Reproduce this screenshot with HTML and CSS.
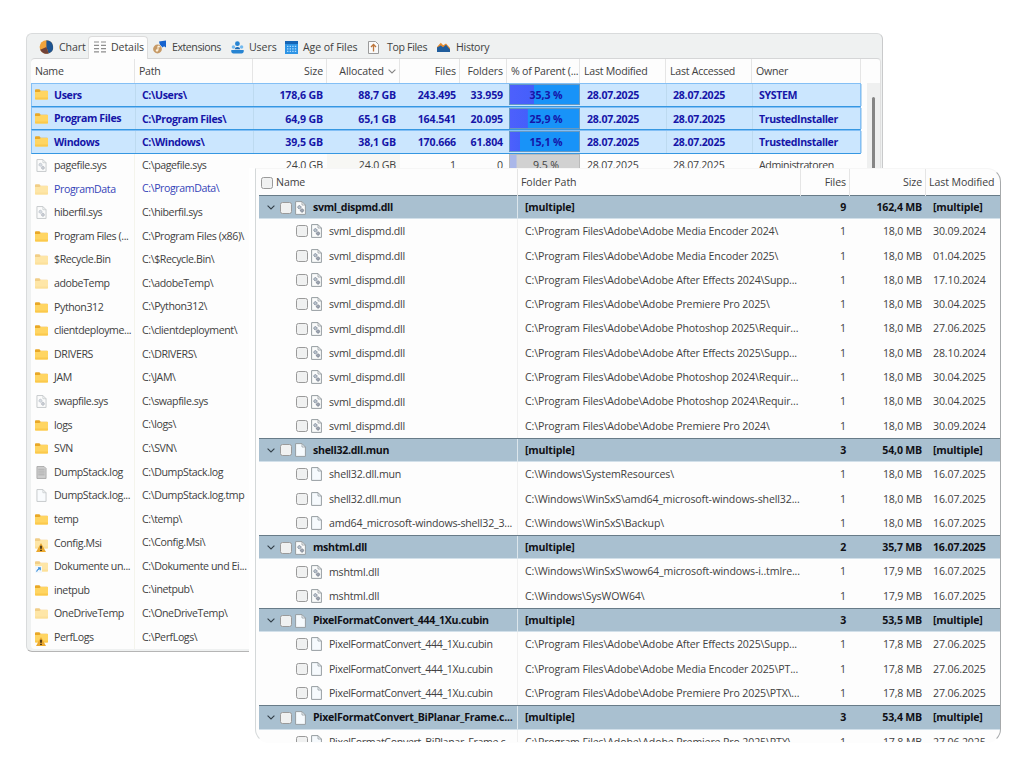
FILE: index.html
```html
<!DOCTYPE html>
<html lang="en">
<head>
<meta charset="utf-8">
<title>Disk usage</title>
<link rel="stylesheet" href="styles.css">
</head>
<body>
<svg class="defs" width="0" height="0">
  <symbol id="folder" viewBox="0 0 13 11"><path d="M0 1.2Q0 .3 .9 .3H4.4L5.7 1.7H12.2Q13 1.7 13 2.5V4H0Z" fill="#e9a827"/><path d="M0 2.9H4.5L5.8 2H13V9.8Q13 10.5 12.3 10.5H.7Q0 10.5 0 9.8Z" fill="#ffd562"/><path d="M0 8.5H13V9.8Q13 10.5 12.3 10.5H.7Q0 10.5 0 9.8Z" fill="#fbc94c"/></symbol>
  <symbol id="doc" viewBox="0 0 11 14"><path d="M.6 .6H7L10.4 4V13.4H.6Z" fill="#f6fafd" stroke="#969da1"/><path d="M7 .6V4H10.4" fill="none" stroke="#969da1" stroke-width=".8"/></symbol>
  <symbol id="gear" viewBox="0 0 11 14"><path d="M.6 .6H7L10.4 4V13.4H.6Z" fill="#fafbfb" stroke="#969da1"/><path d="M7 .6V4H10.4" fill="none" stroke="#969da1" stroke-width=".8"/><circle cx="4.4" cy="6.2" r="1.6" fill="#bcc5ce" stroke="#7e899a" stroke-dasharray="1 .3"/><circle cx="7" cy="9.5" r="1.6" fill="#9da5b2" stroke="#737b89" stroke-dasharray="1 .3"/></symbol>
  <symbol id="log" viewBox="0 0 11 14"><path d="M.6 .6H8.3L10.4 2.7V13.4H.6Z" fill="#cfcfcf" stroke="#aaa"/><path d="M2 3.5H8.8M2 5.5H8.8M2 7.5H8.8M2 9.5H8.8" stroke="#aaa" stroke-width=".9"/></symbol>
  <symbol id="warn" viewBox="0 0 10 9"><path d="M5 0L10 9H0Z" fill="#eba92f"/><path d="M5 2.7V5.7M5 6.7V7.9" stroke="#241c16" stroke-width="1.5"/></symbol>
  <symbol id="link" viewBox="0 0 7 7"><path d="M0 0H7V7H0Z" fill="#f2f8fd"/><path d="M1.5 5.6Q2 3.5 4.8 2.5M3 1.9H5.3V4.2" fill="none" stroke="#3c8fdc" stroke-width="1.1"/></symbol>
  <symbol id="chev" viewBox="0 0 8 5"><path d="M.6 .6L4 4L7.4 .6" fill="none" stroke="currentColor" stroke-width="1.1"/></symbol>
</svg>
<main class="canvas">
  <section class="window usage">
    <nav class="tabs">
      <span class="tab t-chart"><svg width="15" height="14" viewBox="0 0 15 14"><circle cx="7.4" cy="7" r="6.8" fill="#f2a33a"/><path d="M7.4 .2A6.8 6.8 0 0 1 9.6 13.4L7.4 7Z" fill="#1f5490"/><path d="M7.4 7L9.6 13.4A6.8 6.8 0 0 1 1.2 9.8Z" fill="#704238"/></svg><span class="tx">Chart</span></span>
      <span class="tab t-details active"><svg width="12" height="12" viewBox="0 0 12 12"><path d="M0 1H5M0 4.3H5M0 7.6H5M0 10.9H5M7 1H12M7 4.3H12M7 7.6H12M7 10.9H12" stroke="#8d8d8d" stroke-width="1.2"/></svg><span class="tx">Details</span></span>
      <span class="tab t-ext"><svg width="14" height="14" viewBox="0 0 14 14"><path d="M6 1.4L13 .6V7.4L11 6.2L9.6 7.4L6.8 4.6Z" fill="#1563cf"/><circle cx="4.5" cy="9" r="4.4" fill="#c69a67"/><path d="M5 6V10.2M5 6L7 7" stroke="#fff2dc" stroke-width="1.1" fill="none"/><circle cx="4" cy="10.4" r="1.2" fill="#fff2dc"/></svg><span class="tx">Extensions</span></span>
      <span class="tab t-users"><svg width="13" height="13" viewBox="0 0 13 13"><circle cx="6.4" cy="2.7" r="2.4" fill="#2784d2"/><circle cx="2.4" cy="6" r="1.7" fill="#71b8ef"/><circle cx="10.6" cy="6" r="1.7" fill="#71b8ef"/><path d="M3.7 8.2Q4 6 6.4 6Q9 6 9.2 8.2Z" fill="#1767b2"/><path d="M.3 9H12.7V10.7Q12.3 12.5 10.7 12.5H2.3Q.6 12.5 .3 10.7Z" fill="#2784d2"/></svg><span class="tx">Users</span></span>
      <span class="tab t-age"><svg width="13" height="13" viewBox="0 0 13 13"><path d="M0 0H13V13H0Z" fill="#2d94e5"/><path d="M0 0H13V3H0Z" fill="#1565b5"/><path d="M2 5.3H11.4M2 7.8H11.4M2 10.3H11.4" stroke="#addbff" stroke-width="1.3" stroke-dasharray="1.4 1.2"/></svg><span class="tx">Age of Files</span></span>
      <span class="tab t-top"><svg width="11" height="13" viewBox="0 0 11 13"><path d="M.5 .5H7.5L10.5 3.5V12.5H.5Z" fill="#fafafa" stroke="#9b9b9b"/><path d="M5.5 10.5V4M3 6L5.5 3.5L8 6" fill="none" stroke="#bc753b" stroke-width="1.3"/></svg><span class="tx">Top Files</span></span>
      <span class="tab t-hist"><svg width="13" height="10" viewBox="0 0 13 10"><path d="M0 5L3.8 .8L6.2 3.2L9 1.6L13 6V10H0Z" fill="#e78b2c"/><path d="M0 5.5L3.8 3.4L6 5.3L9 2.8L13 7.4V10H0Z" fill="#205d9c"/></svg><span class="tx">History</span></span>
    </nav>
    <div class="body">
      <div class="table">
        <div class="cols uhead"><span>Name</span><span>Path</span><span class="r">Size</span><span class="r alloc">Allocated<svg class="sort" width="8" height="5"><use href="#chev"/></svg></span><span class="r">Files</span><span class="r">Folders</span><span>% of Parent (...</span><span>Last Modified</span><span>Last Accessed</span><span>Owner</span></div>
        <div id="usage-rows"></div>
      </div>
      <div class="scroll"><div class="thumb"></div></div>
    </div>
  </section>
  <section class="front">
    <div class="window dups">
      <div class="dcols dhead"><span class="first"><i class="check"></i>Name</span><span>Folder Path</span><span class="r">Files</span><span class="r">Size</span><span>Last Modified</span></div>
      <div id="dup-rows"></div>
    </div>
  </section>
</main>
<script src="script.js"></script>
</body>
</html>
```
FILE: styles.css
```css
* { box-sizing: border-box; }
body { margin: 0; background: #fff; font-family: "Open Sans", "Noto Sans", sans-serif; font-size: 10.6px; letter-spacing: -0.1px; color: #414141; overflow: hidden; }
.defs { position: absolute; }
.canvas { position: relative; width: 1024px; height: 768px; overflow: hidden; }
svg { display: block; flex: none; }
span { white-space: pre; }

.usage { position: absolute; left: 26px; top: 33px; width: 857px; height: 619px; display: flex; flex-direction: column; background: #eff1f1; border: 1px solid #d9dbdc; border-right-color: #c9cacb; border-bottom: 1px solid #b5b5b5; border-radius: 6px; padding: 0 1px 2px 4px; }
.tabs { display: flex; height: 24px; flex: none; }
.tab { display: flex; align-items: center; height: 24px; padding-top: 2px; padding-left: 8px; gap: 5px; }
.t-chart { width: 57px; }
.t-details { width: 60px; gap: 5px; padding-left: 5px; }
.t-ext { width: 77px; padding-left: 5px; letter-spacing: -0.45px; }
.t-users { width: 54px; padding-left: 6px; }
.t-age { width: 84px; padding-left: 6px; }
.t-top { width: 69px; padding-left: 5px; gap: 8px; letter-spacing: -0.35px; }
.t-hist { padding-left: 5px; gap: 6px; letter-spacing: -0.3px; }
.tab.active { margin-top: 2px; height: 23px; padding-top: 0; padding-bottom: 2px; background: #fdfdfd; border: 1px solid #dcdcdc; border-bottom: 0; border-radius: 4px 4px 0 0; position: relative; z-index: 1; }
.body { display: flex; flex: 1; min-height: 0; background: #fdfdfd; border-top: 1px solid #d5d6d7; border-right: 1px solid #e0e0e0; border-radius: 4px; overflow: hidden; }
.table { width: 830px; flex: none; }
.cols { display: grid; grid-template-columns: 104px 118px 74px 73px 60px 47px 73px 86px 86px 109px; }
.uhead { height: 24px; line-height: 25px; letter-spacing: -0.25px; }
.uhead > span { border-right: 1px solid #e5e5e5; padding-left: 4px; overflow: hidden; }
.uhead > .r { padding-right: 3px; letter-spacing: -0.1px; }
.r { text-align: right; }
.alloc { display: flex; justify-content: flex-end; align-items: center; gap: 4px; }
.sort { color: #888; }
.urow { height: 23.6px; line-height: 23px; letter-spacing: -0.4px; }
.urow > span { overflow: hidden; padding-left: 7px; border-right: 1px solid transparent; }
.urow > .date { letter-spacing: -0.25px; }
.urow > .r { padding-left: 0; padding-right: 3px; letter-spacing: -0.15px; }
.urow > .name { display: flex; align-items: center; padding-left: 4px; border-right-color: #f4f4ec; }
.ico { position: relative; width: 19px; flex: none; }
.ico .page { margin-left: 1px; opacity: .55; }
.ico .log { opacity: 1; }
.faded { opacity: .55; }
.badge { position: absolute; left: 1px; top: 5px; }
.badge.arrow { left: 0; top: 5px; }
.sel { background: #cbe6fe; color: #1515a8; font-weight: 700; border: 1px solid #83bff5; border-bottom-color: #3597e2; letter-spacing: -0.38px; }
.sel > span { line-height: 22px; padding-left: 6px; border-right-color: #bddaf0; }
.sel > .r { padding-right: 4px; border-right-color: transparent; }
.sel > .name { padding-left: 3px; border-right-color: #bddaf0; }
.blue { color: #3544b8; }
.tint { background: #f7f7f4; }
.urow > .barcell { padding: 0 0 0 2px; border: 0; letter-spacing: -0.1px; }
.sel > .barcell { padding: 0 1px; }
.bar { display: block; height: 21px; line-height: 20px; border: 1px solid #6699c2; text-align: center; padding-left: 3px; background: linear-gradient(90deg, #4d60fc, #445ffb) no-repeat #1893f8; }
.bar.gray { height: 23px; line-height: 21px; border-color: #bbb; background: linear-gradient(#aab7e9, #aab7e9) no-repeat #d1d1d1; }
.scroll { width: 14px; margin: 24px 0 0 6px; background: #eff0f0; padding: 14px 0 0 5px; }
.thumb { width: 3px; height: 500px; background: #858585; border-radius: 2px; }

.front { position: absolute; left: 249px; top: 168px; width: 753px; height: 576px; background: #fff; padding-left: 6px; border-top-right-radius: 14px; }
.dups { width: 746px; height: 575px; overflow: hidden; background: #fdfdfd; border: 1px solid #d4d8d9; border-top-color: #f6f6f6; border-bottom-color: #fdfdfd; border-right-color: #a6a9ab; border-radius: 0 14px 14px 14px; padding-left: 3px; }
.dcols { display: grid; grid-template-columns: 259px 283px 49px 76px 74px; }
.dhead { height: 26px; line-height: 27px; }
.dhead > span { border-right: 1px solid #e5e5e5; padding-left: 3px; }
.dhead > span:last-child { border: 0; }
.dhead > .first { display: flex; align-items: center; gap: 3px; padding-left: 2px; }
.dhead > .r { padding-right: 3px; }
.check { display: block; width: 12px; height: 12px; flex: none; border: 1px solid #9a9a9a; border-radius: 2.5px; background: #f0f1f1; }
.drow { height: 24.3px; line-height: 24px; letter-spacing: -0.14px; }
.drow > span { padding-left: 7px; border-right: 1px solid transparent; }
.drow > .r { padding-left: 0; padding-right: 3px; }
.drow > .name { display: flex; align-items: center; padding-left: 37px; border-right-color: #f0f0f0; letter-spacing: -0.2px; }
.drow > .pix { letter-spacing: -0.32px; }
.name .check { margin-right: 3px; }
.name .page2 { margin-right: 7px; }
.group { background: #a9c0d0; color: #101016; font-weight: 700; border-top: 1px solid #687b88; border-bottom: 1px solid #d2e0ea; letter-spacing: -0.2px; }
.group > span { line-height: 23px; }
.group > .name { padding-left: 8px; border-right-color: #dce6ec; letter-spacing: -0.3px; }
.twist { margin-right: 5px; color: #333f49; }
```
FILE: script.js
```js
const use = (id, w, h, cls = "") =>
  `<svg class="${cls}" width="${w}" height="${h}"><use href="#${id}"/></svg>`;

const usage = [
  ["Users", "C:\\Users\\", "folder", "sel", ["178,6 GB", "88,7 GB", "243.495", "33.959", 35.3, "28.07.2025", "28.07.2025", "SYSTEM"]],
  ["Program Files", "C:\\Program Files\\", "folder", "sel", ["64,9 GB", "65,1 GB", "164.541", "20.095", 25.9, "28.07.2025", "28.07.2025", "TrustedInstaller"]],
  ["Windows", "C:\\Windows\\", "folder", "sel", ["39,5 GB", "38,1 GB", "170.666", "61.804", 15.1, "28.07.2025", "28.07.2025", "TrustedInstaller"]],
  ["pagefile.sys", "C:\\pagefile.sys", "gear", "", ["24,0 GB", "24,0 GB", "1", "0", 9.5, "28.07.2025", "28.07.2025", "Administratoren"]],
  ["ProgramData", "C:\\ProgramData\\", "faded", "blue"],
  ["hiberfil.sys", "C:\\hiberfil.sys", "gear", ""],
  ["Program Files (...", "C:\\Program Files (x86)\\", "folder", ""],
  ["$Recycle.Bin", "C:\\$Recycle.Bin\\", "faded", ""],
  ["adobeTemp", "C:\\adobeTemp\\", "faded", ""],
  ["Python312", "C:\\Python312\\", "folder", ""],
  ["clientdeployme...", "C:\\clientdeployment\\", "folder", ""],
  ["DRIVERS", "C:\\DRIVERS\\", "folder", ""],
  ["JAM", "C:\\JAM\\", "folder", ""],
  ["swapfile.sys", "C:\\swapfile.sys", "gear", ""],
  ["logs", "C:\\logs\\", "folder", ""],
  ["SVN", "C:\\SVN\\", "folder", ""],
  ["DumpStack.log", "C:\\DumpStack.log", "log", ""],
  ["DumpStack.log...", "C:\\DumpStack.log.tmp", "doc", ""],
  ["temp", "C:\\temp\\", "folder", ""],
  ["Config.Msi", "C:\\Config.Msi\\", "faded warn", ""],
  ["Dokumente un...", "C:\\Dokumente und Ei...", "faded link", ""],
  ["inetpub", "C:\\inetpub\\", "folder", ""],
  ["OneDriveTemp", "C:\\OneDriveTemp\\", "faded", ""],
  ["PerfLogs", "C:\\PerfLogs\\", "folder warn", ""]
];

function usageIcon(kind) {
  if (["gear", "doc", "log"].includes(kind)) return use(kind, 11, 13, "page " + kind);
  let s = use("folder", 13, 11, kind.startsWith("faded") ? "faded" : "");
  if (kind.includes("warn")) s += use("warn", 10, 9, "badge");
  if (kind.includes("link")) s += use("link", 7, 7, "badge arrow");
  return s;
}

document.getElementById("usage-rows").innerHTML = usage.map(([name, path, icon, cls, v]) => {
  let rest = "";
  if (v) {
    const pct = v[4].toFixed(1).replace(".", ",");
    const gray = cls ? "" : "gray";
    rest = `<span class="r">${v[0]}</span><span class="r ${gray && "tint"}">${v[1]}</span>` +
      `<span class="r">${v[2]}</span><span class="r">${v[3]}</span>` +
      `<span class="barcell"><span class="bar ${gray}" style="background-size:${v[4]}% 100%">${pct} %</span></span>` +
      `<span class="date">${v[5]}</span><span class="date">${v[6]}</span><span>${v[7]}</span>`;
  }
  return `<div class="cols urow ${cls}"><span class="name"><i class="ico">${usageIcon(icon)}</i><span class="tx">${name}</span></span><span>${path}</span>${rest}</div>`;
}).join("");

const A = "C:\\Program Files\\Adobe\\Adobe ";
const W = "C:\\Windows\\";
const pix = "PixelFormatConvert_444_1Xu.cubin";
const dups = [
  { name: "svml_dispmd.dll", icon: "gear", n: 9, size: "162,4 MB", date: "[multiple]", each: "18,0 MB", items: [
    ["", A + "Media Encoder 2024\\", "30.09.2024"],
    ["", A + "Media Encoder 2025\\", "01.04.2025"],
    ["", A + "After Effects 2024\\Supp...", "17.10.2024"],
    ["", A + "Premiere Pro 2025\\", "30.04.2025"],
    ["", A + "Photoshop 2025\\Requir...", "27.06.2025"],
    ["", A + "After Effects 2025\\Supp...", "28.10.2024"],
    ["", A + "Photoshop 2024\\Requir...", "30.04.2025"],
    ["", A + "Photoshop 2024\\Requir...", "30.04.2025"],
    ["", A + "Premiere Pro 2024\\", "30.09.2024"]] },
  { name: "shell32.dll.mun", icon: "doc", n: 3, size: "54,0 MB", date: "[multiple]", each: "18,0 MB", items: [
    ["", W + "SystemResources\\", "16.07.2025"],
    ["", W + "WinSxS\\amd64_microsoft-windows-shell32...", "16.07.2025"],
    ["amd64_microsoft-windows-shell32_3...", W + "WinSxS\\Backup\\", "16.07.2025"]] },
  { name: "mshtml.dll", icon: "gear", n: 2, size: "35,7 MB", date: "16.07.2025", each: "17,9 MB", items: [
    ["", W + "WinSxS\\wow64_microsoft-windows-i..tmlre...", "16.07.2025"],
    ["", W + "SysWOW64\\", "16.07.2025"]] },
  { name: pix, icon: "doc", n: 3, size: "53,5 MB", date: "[multiple]", each: "17,8 MB", items: [
    ["", A + "After Effects 2025\\Supp...", "27.06.2025"],
    ["", A + "Media Encoder 2025\\PT...", "27.06.2025"],
    ["", A + "Premiere Pro 2025\\PTX\\...", "27.06.2025"]] },
  { name: "PixelFormatConvert_BiPlanar_Frame.c...", icon: "doc", n: 3, size: "53,4 MB", date: "[multiple]", each: "17,8 MB", items: [
    ["PixelFormatConvert_BiPlanar_Frame.c...", A + "Premiere Pro 2025\\PTX\\...", "27.06.2025"]] }
];

const dupRow = (cls, lead, icon, name, path, n, size, date) =>
  `<div class="dcols drow ${cls}"><span class="name ${name.startsWith("Pixel") ? "pix" : ""}">${lead}<i class="check"></i>${use(icon, 11, 14, "page2")}<span class="tx">${name}</span></span>` +
  `<span>${path}</span><span class="r">${n}</span><span class="r">${size}</span><span>${date}</span></div>`;

document.getElementById("dup-rows").innerHTML = dups.map(g =>
  dupRow("group", use("chev", 8, 5, "twist"), g.icon, g.name, "[multiple]", g.n, g.size, g.date) +
  g.items.map(([name, path, date]) => dupRow("", "", g.icon, name || g.name, path, 1, g.each, date)).join("")
).join("");
```
